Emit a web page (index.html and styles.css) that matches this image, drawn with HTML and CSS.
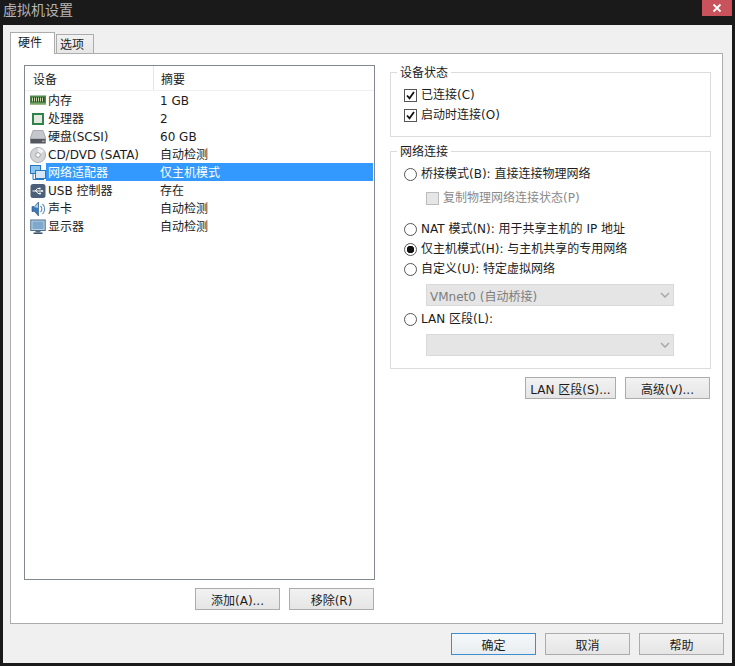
FILE: index.html
```html
<!DOCTYPE html>
<html lang="zh-CN">
<head>
<meta charset="utf-8">
<title>虚拟机设置</title>
<link rel="stylesheet" href="styles.css">
</head>
<body>
<div class="window">
  <header class="titlebar">
    <span class="title">虚拟机设置</span>
    <span class="close"><svg width="10" height="10" viewBox="0 0 10 10"><path d="M1.5 1.5l7 7M8.5 1.5l-7 7" stroke="#fff" stroke-width="1.8"/></svg></span>
  </header>
  <div class="client">
    <div class="tabs">
      <div class="tab active">硬件</div>
      <div class="tab">选项</div>
    </div>
    <section class="panel">
      <div class="left">
        <div class="list">
          <div class="list-head"><span class="h-name">设备</span><span class="h-val">摘要</span></div>
          <div class="row">
            <svg class="ico" viewBox="0 0 16 16"><rect x="0" y="2.500" width="16" height="9.500" fill="#4f8a4a"/><rect x="1.500" y="4" width="13" height="5" fill="#26502a"/><path d="M2.500 4.500v4M4.500 4.500v4M6.500 4.500v4M8.500 4.500v4M10.500 4.500v4M12.500 4.500v4" stroke="#c8dcae"/><rect y="10.500" width="16" height="1.500" fill="#9dbb82"/></svg>
            <span class="name">内存</span><span class="val">1 GB</span>
          </div>
          <div class="row">
            <svg class="ico" viewBox="0 0 16 16"><rect x="2" y="2" width="12" height="12" fill="#2f8448"/><rect x="4" y="4" width="8" height="8" fill="#e4e8e0"/></svg>
            <span class="name">处理器</span><span class="val">2</span>
          </div>
          <div class="row">
            <svg class="ico" viewBox="0 0 16 16"><path d="M3 1.500h10l3 8.500H0z" fill="#c4c8cc" stroke="#84888c" stroke-width=".6"/><rect x=".3" y="10" width="15.400" height="4.500" fill="#54585e"/><rect x="12" y="11.700" width="2.500" height="1" fill="#c8ccd0"/></svg>
            <span class="name">硬盘(SCSI)</span><span class="val">60 GB</span>
          </div>
          <div class="row">
            <svg class="ico" viewBox="0 0 16 16"><circle cx="8" cy="8" r="7.600" fill="#d2d4d6" stroke="#94989c" stroke-width=".7"/><path d="M8 1a7 7 0 0 1 6 3.500L8 8z" fill="#eef0f2"/><circle cx="8" cy="8" r="2.300" fill="#fff" stroke="#8c9094" stroke-width=".8"/></svg>
            <span class="name">CD/DVD (SATA)</span><span class="val">自动检测</span>
          </div>
          <div class="row selected">
            <svg class="ico" viewBox="0 0 16 16"><rect x=".5" y=".5" width="10" height="8" fill="#8cc4ee" stroke="#2878c0"/><rect x="5.500" y="5.500" width="10" height="8" fill="#d4e8f8" stroke="#2878c0"/><path d="M3 8.500v6h11" stroke="#2878c0" fill="none"/></svg>
            <span class="name">网络适配器</span><span class="val">仅主机模式</span>
          </div>
          <div class="row">
            <svg class="ico" viewBox="0 0 16 16"><rect x=".5" y="1" width="15" height="14" rx="2.500" fill="#4c5f78"/><path d="M2.500 8h10.500M5 8l2.500-2.500H9M6 8l2 2.500h1.500" stroke="#fff" fill="none"/><path d="M13.500 8l-2-1.300v2.600z" fill="#fff"/><rect x="9" y="4.700" width="1.600" height="1.600" fill="#fff"/><circle cx="10" cy="10.500" r="1" fill="#fff"/></svg>
            <span class="name">USB 控制器</span><span class="val">存在</span>
          </div>
          <div class="row">
            <svg class="ico" viewBox="0 0 16 16"><path d="M2 5.500h2.500L8.500 1v14L4.500 10.500H2z" fill="#3f78b8" stroke="#25507e" stroke-width=".6"/><path d="M4 6l4-3.500v4.500z" fill="#a8cdec"/><path d="M10.500 5a4 4 0 0 1 0 6M12.500 3a7 7 0 0 1 0 10" stroke="#5c8dbc" stroke-width="1.100" fill="none"/></svg>
            <span class="name">声卡</span><span class="val">自动检测</span>
          </div>
          <div class="row">
            <svg class="ico" viewBox="0 0 16 16"><rect x=".8" y="1" width="14.400" height="10.500" fill="#b6d2e8" stroke="#4c6c88"/><rect x="2.500" y="2.500" width="11" height="7.500" fill="#7fa8cc"/><rect x="5.500" y="11.500" width="5" height="2" fill="#56708a"/><rect x="3.500" y="13.500" width="9" height="1.500" fill="#3c566e"/></svg>
            <span class="name">显示器</span><span class="val">自动检测</span>
          </div>
        </div>
        <div class="actions">
          <button class="btn" type="button">添加(A)...</button>
          <button class="btn" type="button">移除(R)</button>
        </div>
      </div>
      <div class="right">
        <fieldset class="group group-status">
          <legend>设备状态</legend>
          <div class="opt"><span class="check"><svg width="9" height="9" viewBox="0 0 9 9"><path d="M1 4.500l2.500 2.800L8 1" stroke="#111" stroke-width="1.800" fill="none"/></svg></span>已连接(C)</div>
          <div class="opt"><span class="check"><svg width="9" height="9" viewBox="0 0 9 9"><path d="M1 4.500l2.500 2.800L8 1" stroke="#111" stroke-width="1.800" fill="none"/></svg></span>启动时连接(O)</div>
        </fieldset>
        <fieldset class="group group-net">
          <legend>网络连接</legend>
          <div class="opt"><span class="radio"></span>桥接模式(B): 直接连接物理网络</div>
          <div class="opt sub disabled"><span class="check off"></span>复制物理网络连接状态(P)</div>
          <div class="opt gap-nat"><span class="radio"></span>NAT 模式(N): 用于共享主机的 IP 地址</div>
          <div class="opt"><span class="radio on"></span>仅主机模式(H): 与主机共享的专用网络</div>
          <div class="opt"><span class="radio"></span>自定义(U): 特定虚拟网络</div>
          <div class="select"><span>VMnet0 (自动桥接)</span><svg width="10" height="6" viewBox="0 0 10 6"><path d="M1 1l4 4 4-4" stroke="#a8a8a8" stroke-width="1.500" fill="none"/></svg></div>
          <div class="opt after-select"><span class="radio"></span>LAN 区段(L):</div>
          <div class="select"><span></span><svg width="10" height="6" viewBox="0 0 10 6"><path d="M1 1l4 4 4-4" stroke="#a8a8a8" stroke-width="1.500" fill="none"/></svg></div>
        </fieldset>
        <div class="net-actions">
          <button class="btn btn-lan" type="button">LAN 区段(S)...</button>
          <button class="btn" type="button">高级(V)...</button>
        </div>
      </div>
    </section>
    <footer class="footer">
      <button class="btn focus" type="button">确定</button>
      <button class="btn" type="button">取消</button>
      <button class="btn" type="button">帮助</button>
    </footer>
  </div>
</div>
</body>
</html>
```
FILE: styles.css
```css
* { box-sizing: border-box; }
html, body { margin: 0; padding: 0; }
body {
  background: #1a1a1a;
  font-family: "DejaVu Sans", "Noto Sans CJK SC", sans-serif;
  font-size: 12px;
  color: #1c1c1c;
}
.window { width: 735px; height: 666px; overflow: hidden; }
.titlebar {
  height: 25px;
  padding: 0 3px;
  display: flex;
  justify-content: space-between;
  align-items: flex-start;
}
.title {
  font-size: 14px;
  line-height: 19px;
  color: #b5b5b5;
  font-family: "Noto Sans CJK SC", sans-serif;
}
.close {
  width: 30px;
  height: 16px;
  background: #c9535c;
  display: flex;
  align-items: center;
  justify-content: center;
}
.client {
  margin: 0 3px;
  height: 638px;
  background: #f0f0f0;
  padding: 7px 0 0 7px;
}
.tabs { display: flex; height: 21px; align-items: flex-end; position: relative; z-index: 1; }
.tab {
  width: 38px;
  height: 19px;
  margin-left: 1px;
  padding-left: 3px;
  border: 1px solid #acacac;
  border-bottom: 0;
  background: linear-gradient(#f2f2f2, #e6e6e6);
  line-height: 21px;
}
.tab.active {
  width: 45px;
  height: 22px;
  margin-left: 0;
  margin-bottom: -1px;
  padding-left: 7px;
  background: #fff;
  line-height: 20px;
}
.panel {
  width: 713px;
  height: 571px;
  background: #fff;
  border: 1px solid #acacac;
  padding: 11px 11px 0 13px;
  display: flex;
  gap: 15px;
}
.left { width: 351px; }
.list {
  height: 515px;
  border: 1px solid #828790;
}
.list-head {
  height: 25px;
  display: flex;
  border-bottom: 1px solid #f0f0f0;
}
.h-name { width: 129px; padding: 4px 0 0 8px; border-right: 1px solid #e5e5e5; line-height: 20px; }
.h-val { padding: 4px 0 0 7px; line-height: 20px; }
.row {
  height: 18px;
  margin-right: 1px;
  display: flex;
  align-items: center;
  padding: 2px 0 0 5px;
  line-height: 16px;
}
.ico { width: 16px; height: 16px; flex: none; }
.name { width: 114px; padding-left: 2px; flex: none; white-space: nowrap; }
.val { flex: 1; }
.selected { background: linear-gradient(#3399ff, #3399ff) 21px 0 / 100% 100% no-repeat; color: #fff; }
.actions { display: flex; justify-content: flex-end; gap: 9px; margin-top: 8px; padding-right: 1px; }
.btn {
  width: 85px;
  height: 22px;
  padding: 0;
  border: 1px solid #acacac;
  background: linear-gradient(#f2f2f2, #e5e5e5);
  font: inherit;
  color: #1c1c1c;
}
.btn-lan { width: 91px; }
.focus { border-color: #3b8fd0; background: linear-gradient(#f5f8fb, #e8edf1); }
.right { width: 321px; }
.group {
  margin: 0;
  padding: 6px 0 0 13px;
  border: 1px solid #dcdcdc;
  min-width: 0;
}
.group legend {
  margin-left: -7px;
  padding: 2px 3px 0;
  line-height: 12px;
}
.group-status { height: 72px; }
.group-net { height: 225px; margin-top: 7px; }
.opt { height: 20px; display: flex; align-items: center; line-height: 20px; }
.sub { margin-top: 4px; padding-left: 22px; }
.disabled { color: #8a8a8a; }
.gap-nat { margin-top: 11px; }
.after-select { margin-top: 3px; }
.check {
  width: 13px;
  height: 13px;
  margin-right: 4px;
  border: 1px solid #555;
  background: #fff;
  display: flex;
  align-items: center;
  justify-content: center;
}
.check.off { background: #e6e6e6; border-color: #bcbcbc; }
.radio {
  width: 13px;
  height: 13px;
  margin-right: 4px;
  border: 1px solid #555;
  border-radius: 50%;
  background: #fff;
  flex: none;
}
.radio.on { background: radial-gradient(circle, #111 0 3.500px, #fff 4px); }
.select {
  width: 248px;
  height: 22px;
  margin: 5px 0 0 22px;
  padding: 0 3px 0 3px;
  border: 1px solid #d9d9d9;
  background: #e5e5e5;
  color: #7d7d7d;
  display: flex;
  align-items: center;
  justify-content: space-between;
}
.net-actions { display: flex; justify-content: flex-end; gap: 9px; margin-top: 8px; padding-right: 1px; }
.footer { display: flex; gap: 9px; justify-content: flex-end; padding-right: 8px; margin-top: 9px; }
```
